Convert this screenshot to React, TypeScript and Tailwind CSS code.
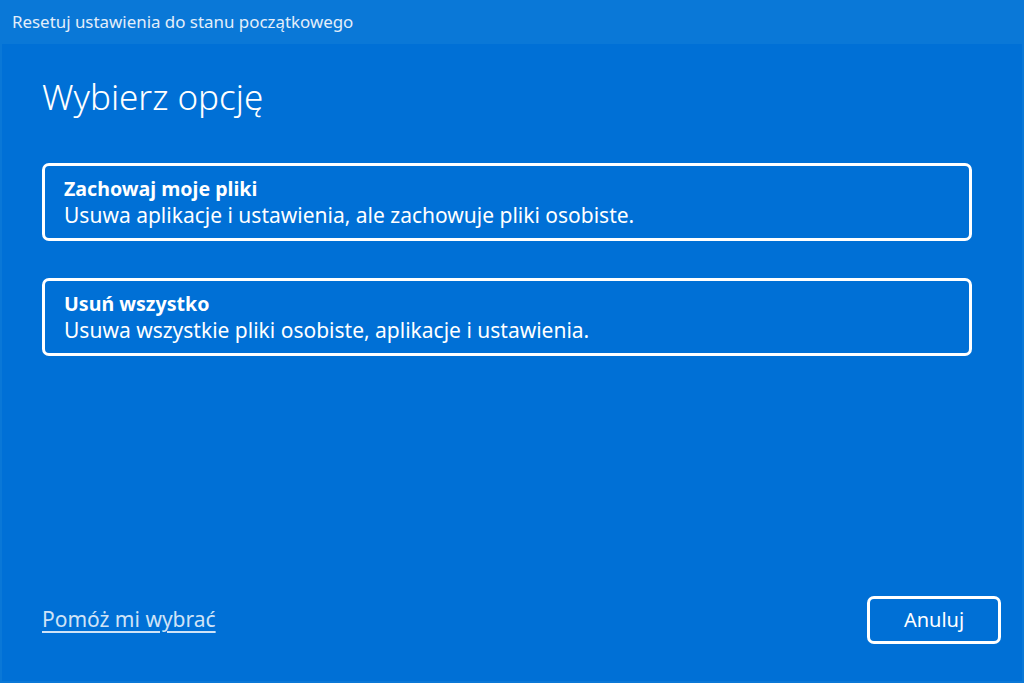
const font = { fontFamily: '"Segoe UI", "Noto Sans", "Open Sans", sans-serif' };

const Option = ({ title, desc }: { title: string; desc: string }) => (
  <button className="flex h-[78px] w-full flex-col items-start justify-center rounded-[7px] border-[3px] border-white px-[19px] text-left">
    <span className="text-[19.6px] font-bold leading-[25px] text-white">{title}</span>
    <span className="text-[21px] leading-[28px] text-white">{desc}</span>
  </button>
);

export default function App() {
  return (
    <div
      className="flex h-[683px] w-[1024px] flex-col bg-[#0a78d7] px-[2px] pb-[2px]"
      style={font}
    >
      <div className="flex h-[44px] items-center px-[10px] text-[16.9px] text-[#e3eefa]">
        Resetuj ustawienia do stanu początkowego
      </div>
      <div className="flex flex-1 flex-col bg-[#0070d6] pl-[40px] pr-[50px]">
        <h1 className="mt-[31px] text-[35px] font-light leading-[44px] text-white">
          Wybierz opcję
        </h1>
        <div className="mt-[44px] flex flex-col gap-[37px]">
          <Option
            title="Zachowaj moje pliki"
            desc="Usuwa aplikacje i ustawienia, ale zachowuje pliki osobiste."
          />
          <Option
            title="Usuń wszystko"
            desc="Usuwa wszystkie pliki osobiste, aplikacje i ustawienia."
          />
        </div>
        <div className="mt-auto mb-[37px] flex items-center justify-between">
          <a className="cursor-pointer text-[21px] text-[#cfe3f7] underline underline-offset-[4px]">
            Pomóż mi wybrać
          </a>
          <button className="mr-[-29px] h-[48px] w-[134px] rounded-[7px] border-[3px] border-white text-[20px] text-white">
            Anuluj
          </button>
        </div>
      </div>
    </div>
  );
}
